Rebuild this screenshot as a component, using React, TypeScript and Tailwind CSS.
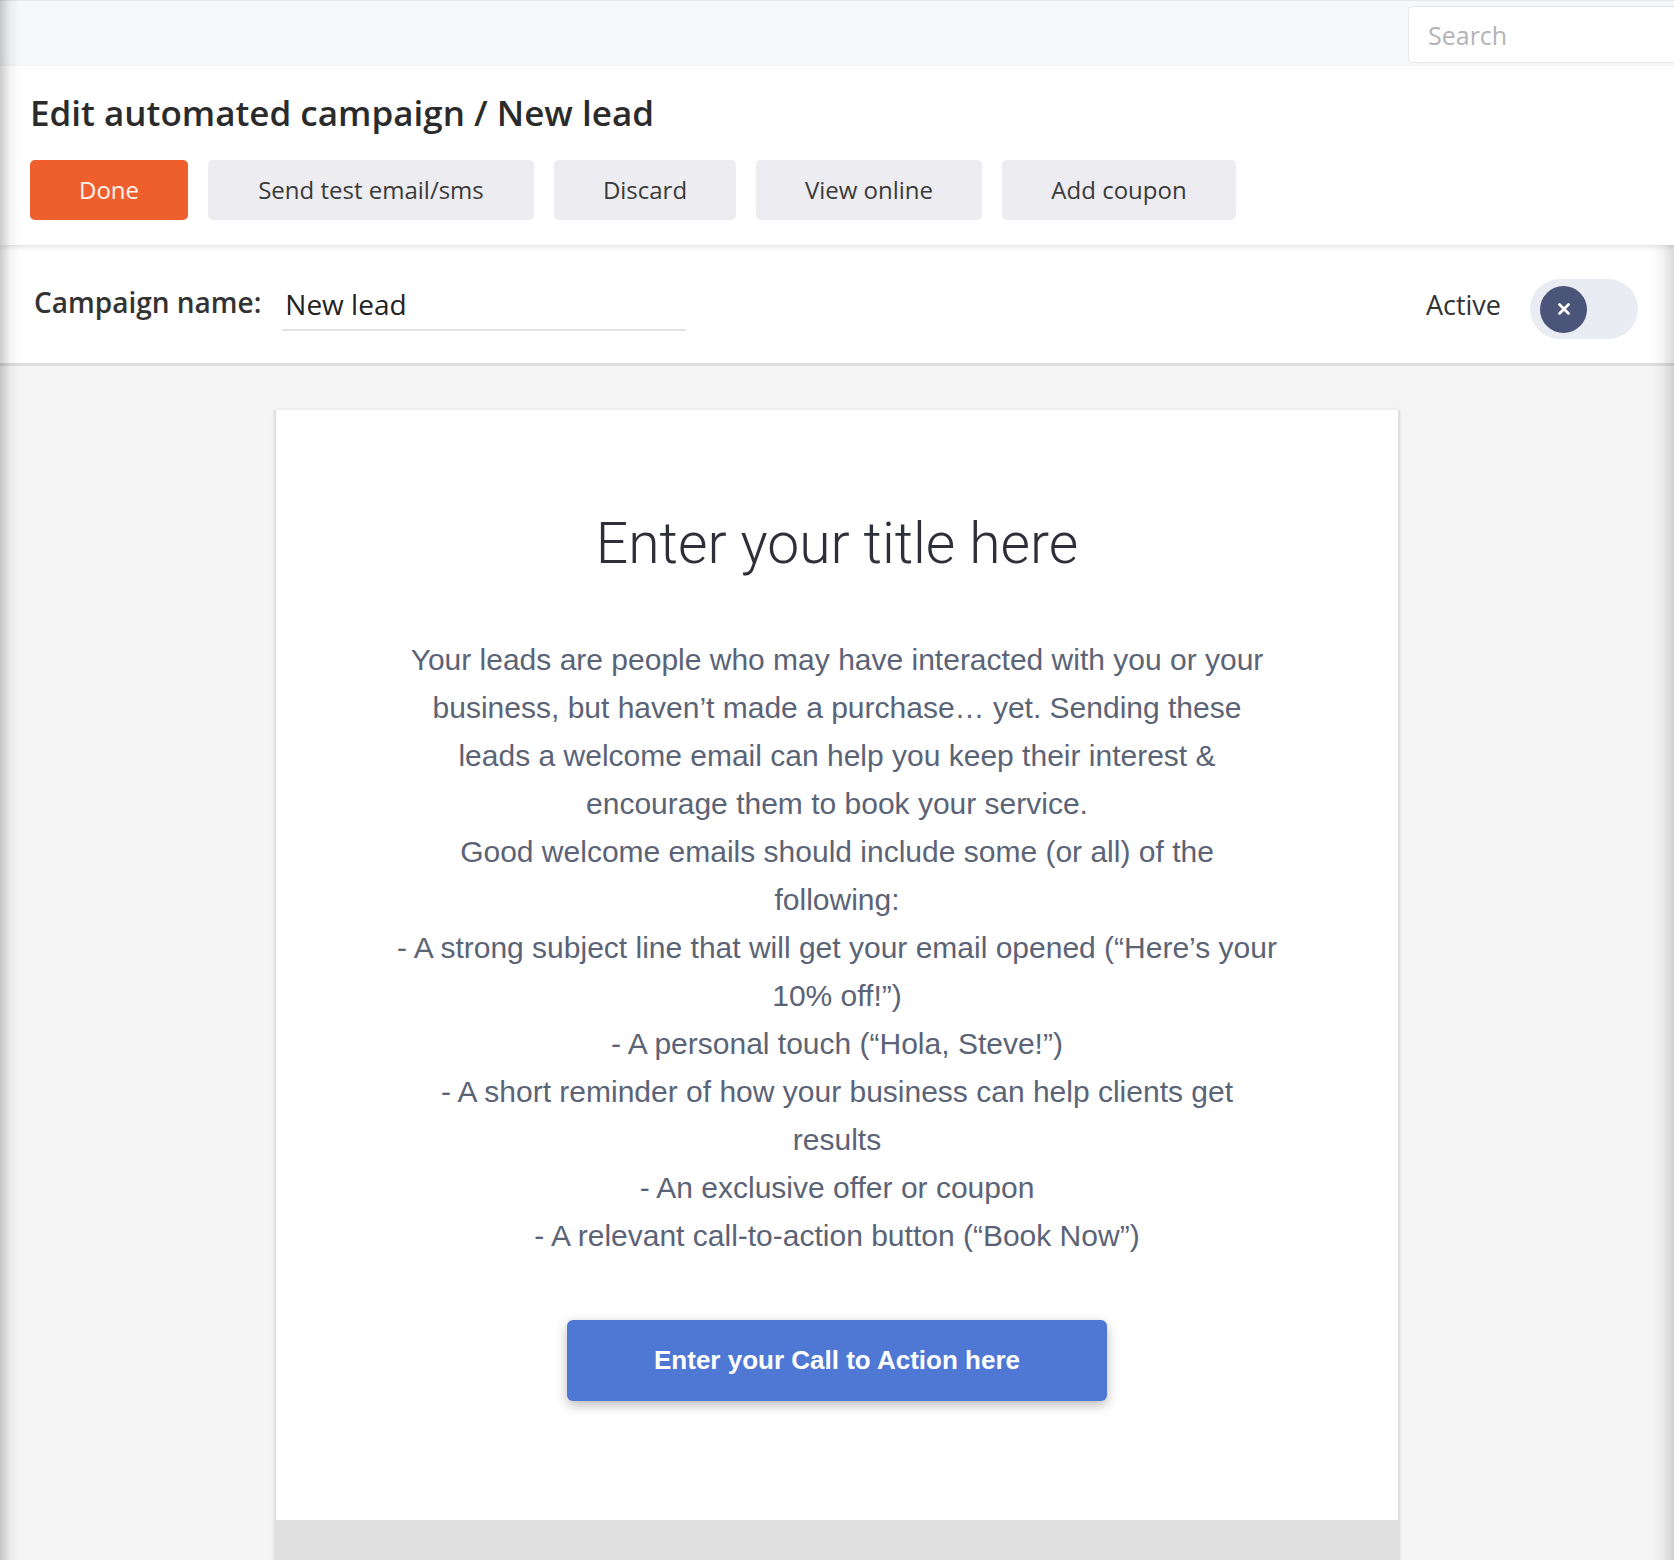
import { X } from 'lucide-react';

const actions = [
  { label: 'Send test email/sms', w: 'w-[326px]' },
  { label: 'Discard', w: 'w-[182px]' },
  { label: 'View online', w: 'w-[226px]' },
  { label: 'Add coupon', w: 'w-[234px]' },
];

export default function App() {
  return (
    <div className="relative min-h-[1560px] overflow-hidden bg-[#f5f5f5] font-['Open_Sans',sans-serif] text-[#333]">
      {/* top bar */}
      <div className="flex h-[66px] items-start justify-end border-t border-[#e3e5ea] bg-[#f7f8fa] pt-[5px]">
        <input
          placeholder="Search"
          className="h-[57px] w-[266px] rounded-l-[5px] border border-r-0 border-[#e6e8ee] bg-white pl-[19px] text-[25px] outline-none placeholder:text-[#b3b3b8]"
        />
      </div>

      {/* header */}
      <div className="relative z-10 h-[179px] bg-white px-[30px] pt-[24px] shadow-[0_2px_5px_rgba(0,0,0,0.12)]">
        <h1 className="text-[35px] font-semibold leading-[46px] text-[#2b2b2b]">
          Edit automated campaign / New lead
        </h1>
        <div className="mt-[24px] flex gap-[20px]">
          <button className="h-[60px] w-[158px] rounded-[5px] bg-[#ef5f2e] text-[24px] text-[#fff3ee]">
            Done
          </button>
          {actions.map((a) => (
            <button
              key={a.label}
              className={`h-[60px] ${a.w} rounded-[5px] bg-[#ececf1] text-[24px] text-[#3a3a3a]`}
            >
              {a.label}
            </button>
          ))}
        </div>
      </div>

      {/* campaign row */}
      <div className="flex h-[121px] items-center border-b-[3px] border-[#dedede] bg-white pl-[34px] pr-[36px] pt-[2px]">
        <span className="mb-[6px] text-[28px] font-semibold text-[#333]">Campaign name:</span>
        <div className="ml-[21px] mt-[4px] w-[404px] border-b-2 border-[#e2e2e2] pb-[4px] pl-[3px] text-[28px] text-[#222]">
          New lead
        </div>
        <span className="ml-auto text-[27px] text-[#333]">Active</span>
        <div className="ml-[29px] mt-[8px] flex h-[60px] w-[108px] items-center rounded-full bg-[#e9ecf2] pl-[10px]">
          <span className="flex h-[47px] w-[47px] items-center justify-center rounded-full bg-[#4b5579]">
            <X size={18} strokeWidth={3.5} className="text-white" />
          </span>
        </div>
      </div>

      {/* email preview */}
      <div className="flex justify-center pt-[44px]">
        <div className="w-[1126px] border-x-2 border-[#e0e0e0] bg-white shadow-[0_0_4px_rgba(0,0,0,0.08)]">
          <div className="flex flex-col items-center pb-[119px] pt-[100px] text-center font-['Roboto','Liberation_Sans',Arial,sans-serif]">
            <h2 className="text-[57px] font-light leading-[68px] text-[#2e2f38]">Enter your title here</h2>
            <div className="mt-[58px] font-['Liberation_Sans',Arial,sans-serif] text-[30px] leading-[48px] text-[#5b6376]">
              <p>
                Your leads are people who may have interacted with you or your
                <br />
                business, but haven’t made a purchase… yet. Sending these
                <br />
                leads a welcome email can help you keep their interest &amp;
                <br />
                encourage them to book your service.
              </p>
              <p>
                Good welcome emails should include some (or all) of the
                <br />
                following:
              </p>
              <p>
                - A strong subject line that will get your email opened (“Here’s your
                <br />
                10% off!”)
              </p>
              <p>- A personal touch (“Hola, Steve!”)</p>
              <p>
                - A short reminder of how your business can help clients get
                <br />
                results
              </p>
              <p>- An exclusive offer or coupon</p>
              <p>- A relevant call-to-action button (“Book Now”)</p>
            </div>
            <button className="mt-[60px] h-[81px] w-[540px] rounded-[6px] bg-[#4f78d5] font-['Liberation_Sans',Arial,sans-serif] text-[26px] font-bold text-white shadow-[0_4px_12px_rgba(0,0,0,0.28)]">
              Enter your Call to Action here
            </button>
          </div>
          <div className="h-[80px] bg-[#e0e0e0]" />
        </div>
      </div>

      {/* edge shadows */}
      <div className="pointer-events-none absolute left-0 top-0 z-20 h-full w-[20px] bg-linear-to-r from-black/20 via-black/5 to-transparent" />
      <div className="pointer-events-none absolute right-0 top-[245px] z-20 h-full w-[22px] bg-linear-to-l from-black/15 via-black/5 to-transparent" />
    </div>
  );
}
